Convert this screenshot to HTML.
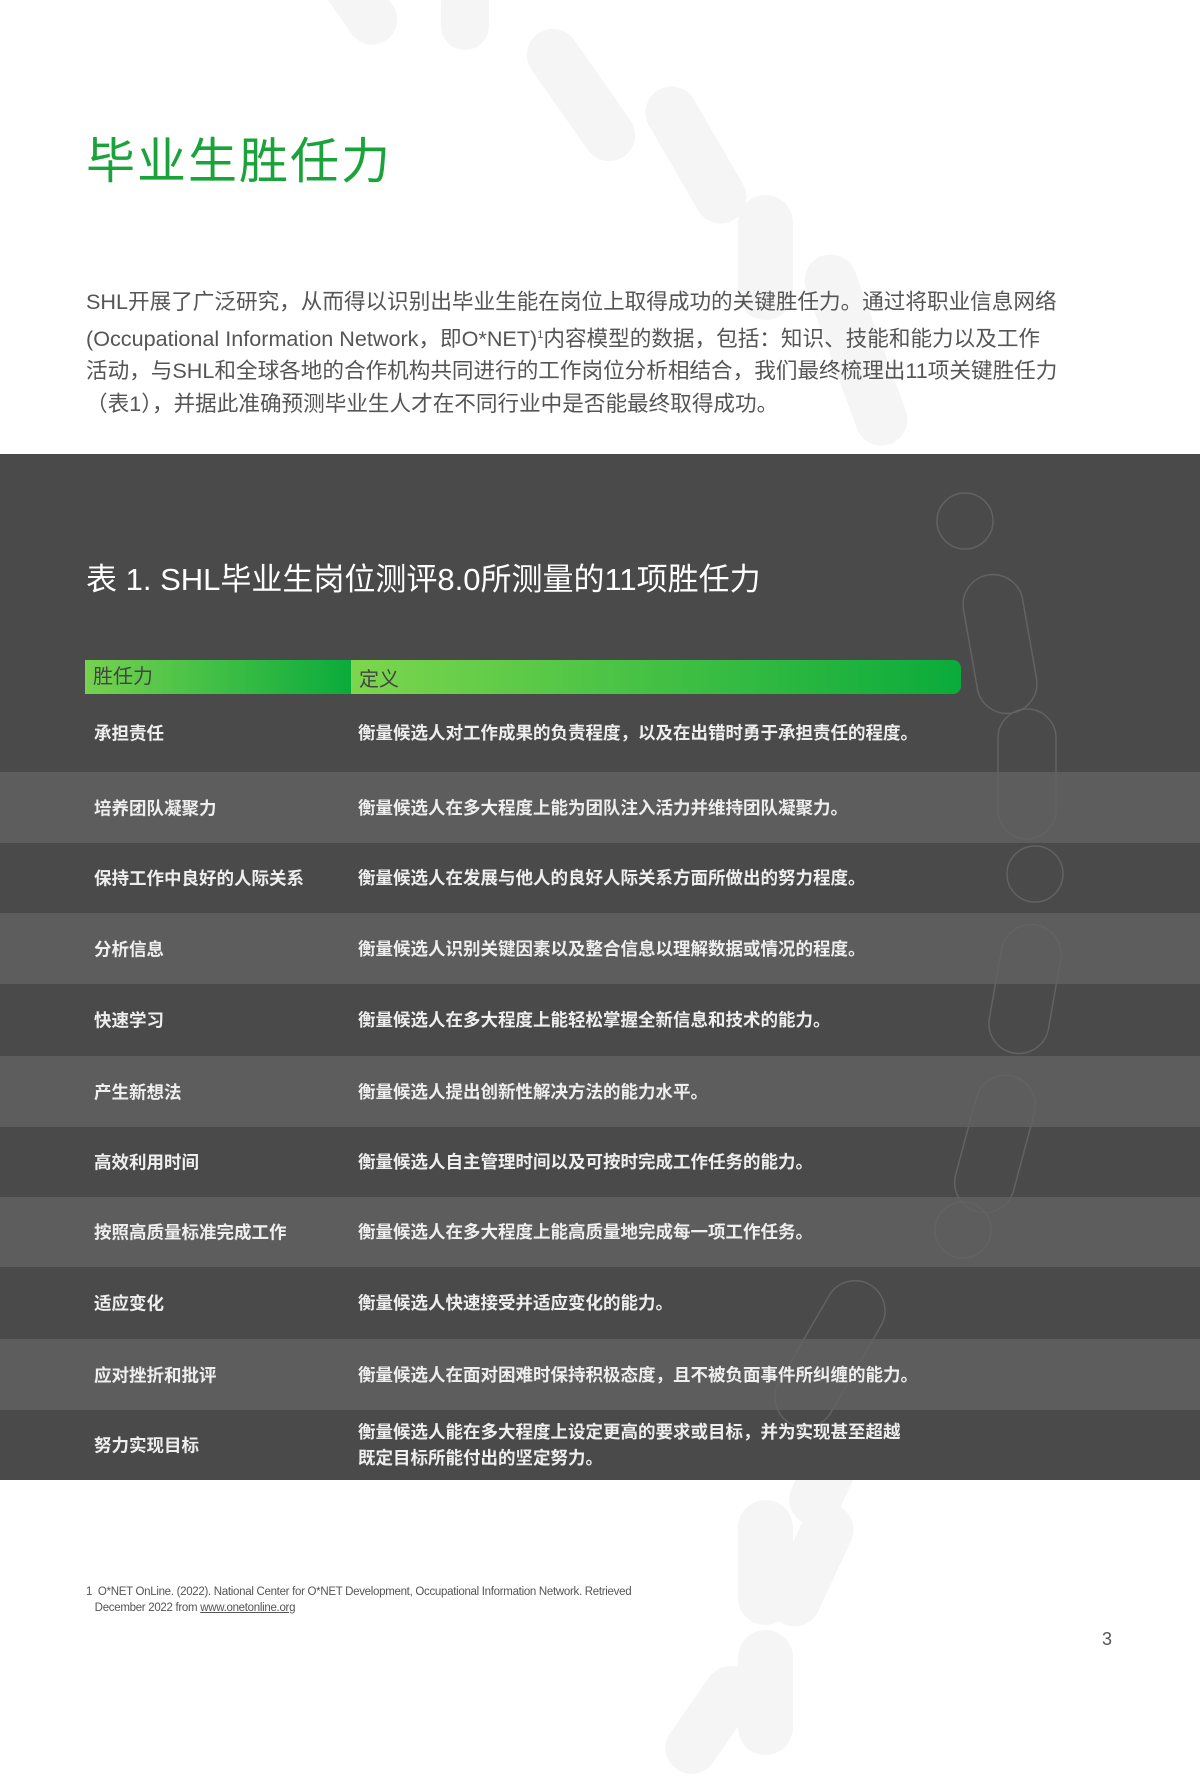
<!DOCTYPE html>
<html><head><meta charset="utf-8"><style>
*{margin:0;padding:0;box-sizing:border-box}
body{width:1200px;height:1698px;position:relative;background:#fff;overflow:hidden;font-family:"Liberation Sans","Noto Sans CJK SC",sans-serif}
.pill{position:absolute;background:#f5f5f5;border-radius:30px}
.abs{position:absolute}
h1{position:absolute;left:86px;top:132px;font-size:49px;font-weight:normal;color:#1aa33a;letter-spacing:2px;line-height:60px}
.para{position:absolute;left:86px;top:286px;font-size:21.6px;line-height:32.6px;color:#555;white-space:nowrap}
.dark{position:absolute;left:0;top:454px;width:1200px;height:1026px;background:#4a4a4a;overflow:hidden}
.ttl{position:absolute;left:86px;top:554px;font-size:31px;color:#fff;white-space:nowrap}
.hdr{position:absolute;top:660px;height:34px;font-size:20px;color:#444;line-height:34px;padding-left:8px}
.row{position:absolute;left:0;width:1200px;font-size:17.5px;color:#eee;font-weight:bold}
.row span{position:absolute;top:50%;transform:translateY(-50%)}
.l{left:94px}.d{left:358px;line-height:26px}
.light{background:#5d5d5d}
.fn{position:absolute;left:86px;top:1584px;font-size:11.5px;color:#555;line-height:16px;letter-spacing:-0.3px}
</style></head><body>
<div class="pill" style="left:330px;top:-60px;width:50px;height:110px;transform:rotate(-35deg)"></div>
<div class="pill" style="left:441px;top:-20px;width:48px;height:70px"></div>
<div class="pill" style="left:555px;top:20px;width:52px;height:150px;transform:rotate(-35deg)"></div>
<div class="pill" style="left:670px;top:80px;width:52px;height:150px;transform:rotate(-30deg)"></div>
<div class="pill" style="left:738px;top:195px;width:55px;height:125px;border-radius:30px"></div>
<div class="pill" style="left:830px;top:250px;width:52px;height:200px;transform:rotate(-20deg)"></div>
<div class="pill" style="left:738px;top:1630px;width:55px;height:125px;border-radius:30px"></div>
<div class="pill" style="left:685px;top:1660px;width:52px;height:120px;transform:rotate(35deg)"></div>
<div class="pill" style="left:785px;top:1500px;width:52px;height:130px;transform:rotate(25deg)"></div>
<div class="pill" style="left:738px;top:1500px;width:55px;height:125px;border-radius:30px"></div>
<div class="pill" style="left:810px;top:1380px;width:52px;height:150px;transform:rotate(25deg)"></div>
<h1>毕业生胜任力</h1>
<div class="para">SHL开展了广泛研究，从而得以识别出毕业生能在岗位上取得成功的关键胜任力。通过将职业信息网络<br>(Occupational Information Network，即O*NET)<sup style="font-size:11px">1</sup>内容模型的数据，包括：知识、技能和能力以及工作<br>活动，与SHL和全球各地的合作机构共同进行的工作岗位分析相结合，我们最终梳理出11项关键胜任力<br>（表1），并据此准确预测毕业生人才在不同行业中是否能最终取得成功。</div>
<div class="dark">
<div class="row light" style="top:318px;height:71px"></div>
<div class="row light" style="top:459px;height:71px"></div>
<div class="row light" style="top:602px;height:71px"></div>
<div class="row light" style="top:743px;height:70px"></div>
<div class="row light" style="top:885px;height:71px"></div>
<svg class="abs" style="left:0;top:0" width="1200" height="1026" fill="none" stroke="#626262" stroke-width="1.5">
<circle cx="965" cy="67" r="28"/>
<rect x="970" y="120" width="60" height="140" rx="30" transform="rotate(-10 1000 190)"/>
<rect x="998" y="255" width="58" height="130" rx="29"/>
<circle cx="1035" cy="420" r="28"/>
<rect x="995" y="470" width="60" height="130" rx="30" transform="rotate(10 1025 535)"/>
<rect x="965" y="620" width="60" height="140" rx="30" transform="rotate(15 995 690)"/>
<circle cx="963" cy="776" r="28"/>
<rect x="800" y="820" width="60" height="160" rx="30" transform="rotate(30 830 900)"/>
</svg>
</div>
<div class="ttl">表 1. SHL毕业生岗位测评8.0所测量的11项胜任力</div>
<div class="hdr" style="left:85px;width:266px;background:linear-gradient(90deg,#76d24f,#0aab3b)">胜任力</div>
<div class="hdr" style="left:351px;width:610px;background:linear-gradient(90deg,#7dd64d,#0aab3b);border-radius:0 8px 8px 0;padding-top:3px">定义</div>
<div class="row" style="top:694px;height:78px"><span class="l">承担责任</span><span class="d">衡量候选人对工作成果的负责程度，以及在出错时勇于承担责任的程度。</span></div>
<div class="row" style="top:772px;height:71px"><span class="l">培养团队凝聚力</span><span class="d">衡量候选人在多大程度上能为团队注入活力并维持团队凝聚力。</span></div>
<div class="row" style="top:843px;height:70px"><span class="l">保持工作中良好的人际关系</span><span class="d">衡量候选人在发展与他人的良好人际关系方面所做出的努力程度。</span></div>
<div class="row" style="top:913px;height:71px"><span class="l">分析信息</span><span class="d">衡量候选人识别关键因素以及整合信息以理解数据或情况的程度。</span></div>
<div class="row" style="top:984px;height:72px"><span class="l">快速学习</span><span class="d">衡量候选人在多大程度上能轻松掌握全新信息和技术的能力。</span></div>
<div class="row" style="top:1056px;height:71px"><span class="l">产生新想法</span><span class="d">衡量候选人提出创新性解决方法的能力水平。</span></div>
<div class="row" style="top:1127px;height:70px"><span class="l">高效利用时间</span><span class="d">衡量候选人自主管理时间以及可按时完成工作任务的能力。</span></div>
<div class="row" style="top:1197px;height:70px"><span class="l">按照高质量标准完成工作</span><span class="d">衡量候选人在多大程度上能高质量地完成每一项工作任务。</span></div>
<div class="row" style="top:1267px;height:72px"><span class="l">适应变化</span><span class="d">衡量候选人快速接受并适应变化的能力。</span></div>
<div class="row" style="top:1339px;height:71px"><span class="l">应对挫折和批评</span><span class="d">衡量候选人在面对困难时保持积极态度，且不被负面事件所纠缠的能力。</span></div>
<div class="row" style="top:1410px;height:70px"><span class="l">努力实现目标</span><span class="d">衡量候选人能在多大程度上设定更高的要求或目标，并为实现甚至超越<br>既定目标所能付出的坚定努力。</span></div>
<div class="fn">1&nbsp;&nbsp;O*NET OnLine. (2022). National Center for O*NET Development, Occupational Information Network. Retrieved<br>&nbsp;&nbsp;&nbsp;December 2022 from <u>www.onetonline.org</u></div>
<div class="abs" style="left:1102px;top:1629px;font-size:18px;color:#555">3</div>
</body></html>
